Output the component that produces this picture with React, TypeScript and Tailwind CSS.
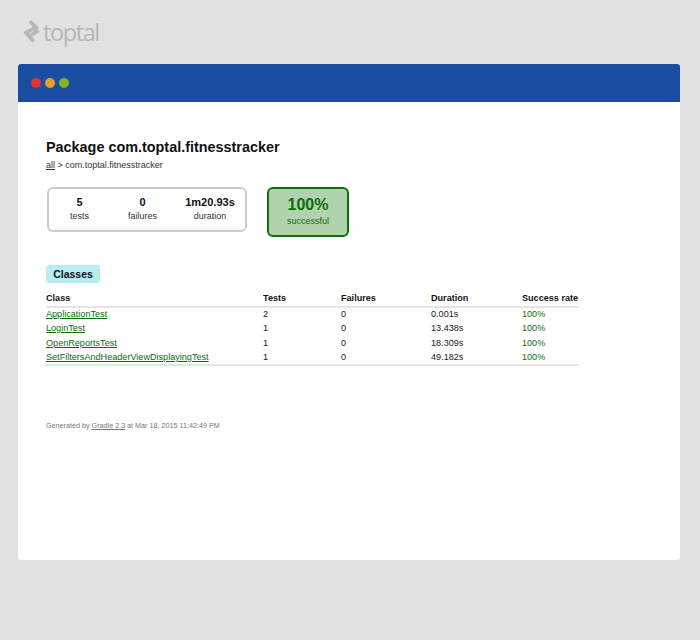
export default function App() {
  const rows = [
    ["ApplicationTest", "2", "0", "0.001s"],
    ["LoginTest", "1", "0", "13.438s"],
    ["OpenReportsTest", "1", "0", "18.309s"],
    ["SetFiltersAndHeaderViewDisplayingTest", "1", "0", "49.182s"],
  ];
  const stats = [
    ["5", "tests", "w-[61px]"],
    ["0", "failures", "w-[65px]"],
    ["1m20.93s", "duration", "w-[70px]"],
  ];
  return (
    <div className="w-[700px] h-[640px] bg-[#e2e2e2] pt-[20px] px-[18px] overflow-hidden font-['Liberation_Sans',Arial,sans-serif]">
      <div className="h-[24px] flex items-center pl-[5px] text-[#b6b6b6]">
        <svg width="20" height="24" viewBox="0 0 20 24" fill="none" stroke="currentColor" strokeWidth="3.6">
          <path d="M7 1.5 L13 7.5 L3 12.5 L10.5 21.5" />
          <path d="M15.5 10.5 L8 15" />
        </svg>
        <span className="font-['Open_Sans',sans-serif] text-[23.5px] leading-[24px] tracking-[-1.4px] font-normal">toptal</span>
      </div>
      <div className="mt-[20px] w-[662px] h-[496px] bg-white rounded-[3px] overflow-hidden">
        <div className="h-[38px] bg-[#1a4ca1] flex items-center gap-[4px] pl-[13px]">
          <span className="w-[10px] h-[10px] rounded-full bg-[#e8302f]" />
          <span className="w-[10px] h-[10px] rounded-full bg-[#e69f21]" />
          <span className="w-[10px] h-[10px] rounded-full bg-[#85b51a]" />
        </div>
        <div className="pl-[28px] pt-[35px] w-[561px] text-black">
          <h1 className="text-[14.4px] leading-[20px] font-bold text-[#111]">Package com.toptal.fitnesstracker</h1>
          <p className="text-[9px] leading-[14px] mt-[1px] text-[#333]">
            <a className="underline">all</a> &gt; com.toptal.fitnesstracker
          </p>
          <div className="flex mt-[15px] ml-[1px] items-start">
            <div className="w-[200px] h-[45px] border-2 border-[#cccccc] rounded-[6px] flex items-center pb-[2px]">
              {stats.map(([value, label, width]) => (
                <div key={label} className={`${width} text-center`}>
                  <div className="text-[11px] leading-[14px] font-bold text-[#111]">{value}</div>
                  <div className="text-[9px] leading-[14px] text-[#333]">{label}</div>
                </div>
              ))}
            </div>
            <div className="ml-[20px] w-[82px] h-[50px] border-2 border-[#0b6e0b] rounded-[6px] bg-[#b0d3ae] text-center text-[#0a6e0a] pt-[6px]">
              <div className="text-[16px] leading-[20px] font-bold">100%</div>
              <div className="text-[9px] leading-[13px]">successful</div>
            </div>
          </div>
          <div className="mt-[28px] w-[54px] h-[18px] rounded-[3px] bg-[#b8eef3] text-[10.5px] leading-[18px] font-bold text-center text-[#111]">Classes</div>
          <table className="mt-[9px] w-[533px] table-fixed border-collapse text-[9.1px] text-[#222]">
            <thead>
              <tr className="border-b-2 border-[#e5e5e5] h-[15px] text-[#111]">
                <th className="w-[217px] text-left font-bold p-0">Class</th>
                <th className="w-[78px] text-left font-bold p-0">Tests</th>
                <th className="w-[90px] text-left font-bold p-0">Failures</th>
                <th className="w-[91px] text-left font-bold p-0">Duration</th>
                <th className="text-left font-bold p-0">Success rate</th>
              </tr>
            </thead>
            <tbody className="border-b-2 border-[#e5e5e5]">
              {rows.map(([name, tests, failures, duration]) => (
                <tr key={name} className="h-[14.5px]">
                  <td className="p-0"><a className="underline text-[#0a6e0a]">{name}</a></td>
                  <td className="p-0">{tests}</td>
                  <td className="p-0">{failures}</td>
                  <td className="p-0">{duration}</td>
                  <td className="p-0 text-[#0a6e0a]">100%</td>
                </tr>
              ))}
            </tbody>
          </table>
          <p className="mt-[54px] text-[7.2px] leading-[12px] text-[#777]">
            Generated by <a className="underline">Gradle 2.3</a> at Mar 18, 2015 11:42:49 PM
          </p>
        </div>
      </div>
    </div>
  );
}
